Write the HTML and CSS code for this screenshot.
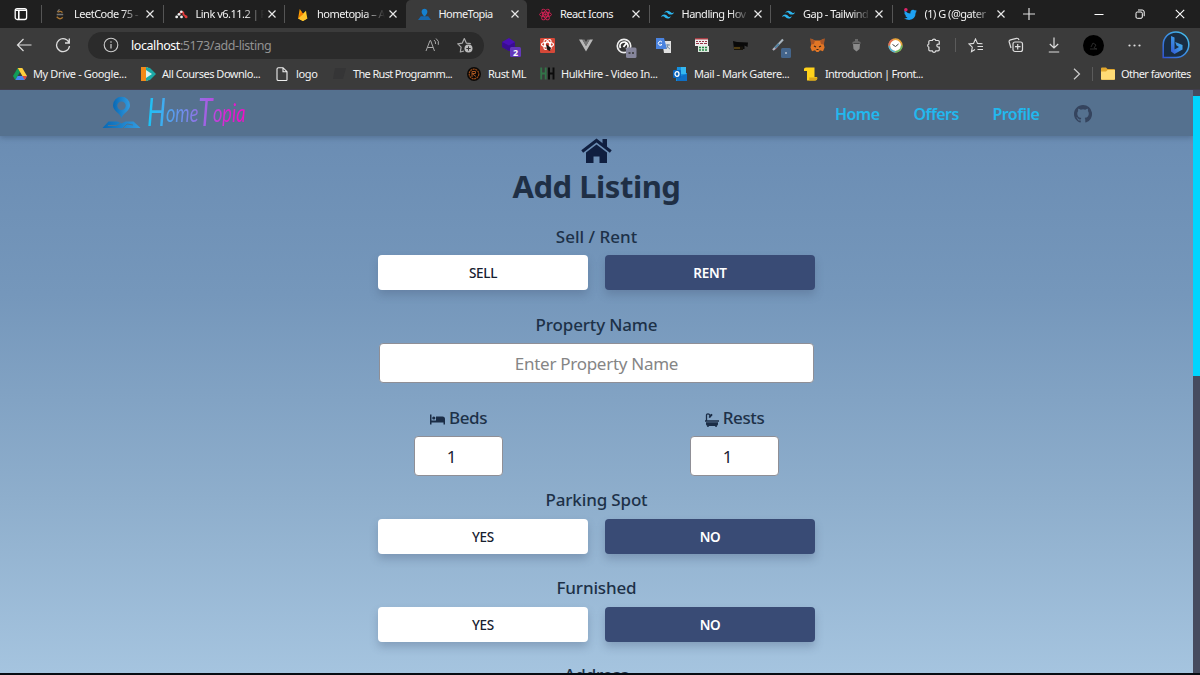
FILE: index.html
```html
<!DOCTYPE html>
<html lang="en">
<head>
<meta charset="utf-8">
<title>HomeTopia</title>
<link rel="stylesheet" href="styles.css">
</head>
<body>
<svg class="defs" width="0" height="0">
  <defs>
    <symbol id="close" viewBox="0 0 10 10"><path d="M1.5 1.5l7 7M8.5 1.5l-7 7" stroke="#e8e8e8" stroke-width="1.2" fill="none"/></symbol>
    <symbol id="tailwind" viewBox="0 0 24 24"><path fill="#2cb5ee" d="M12 5c-3.200 0-5.200 1.600-6 4.800 1.200-1.600 2.600-2.200 4.200-1.800.9.230 1.560.890 2.280 1.630C13.660 10.810 15.020 12.200 18 12.200c3.200 0 5.200-1.600 6-4.800-1.200 1.600-2.600 2.200-4.200 1.800-.910-.230-1.570-.890-2.290-1.630C16.340 6.390 14.980 5 12 5zM6 12.200c-3.200 0-5.200 1.600-6 4.800 1.200-1.600 2.600-2.200 4.200-1.800.910.230 1.570.890 2.290 1.630C7.660 18.010 9.020 19.400 12 19.400c3.200 0 5.200-1.600 6-4.800-1.200 1.600-2.600 2.200-4.200 1.800-.910-.230-1.570-.890-2.290-1.630C10.340 13.590 8.980 12.200 6 12.200z"/></symbol>
    <symbol id="atom" viewBox="0 0 24 24"><g fill="none" stroke="currentColor" stroke-width="1.700"><ellipse cx="12" cy="12" rx="11" ry="4.300"/><ellipse cx="12" cy="12" rx="11" ry="4.300" transform="rotate(60 12 12)"/><ellipse cx="12" cy="12" rx="11" ry="4.300" transform="rotate(120 12 12)"/></g><circle cx="12" cy="12" r="2.200" fill="currentColor"/></symbol>
  </defs>
</svg>

<div class="browser">
  <div class="tabs">
    <div class="tab-menu"><svg width="14" height="14" viewBox="0 0 14 14"><rect x="1.200" y="1.700" width="11.400" height="10.800" rx="2" fill="none" stroke="#fff" stroke-width="1.300"/><path d="M1.500 3.200h11M4.800 4v8" fill="none" stroke="#fff" stroke-width="1.600"/></svg></div>
    <div class="tab"><svg class="fav" viewBox="0 0 14 14"><path d="M7 1.500L4.500 4.200M4 7h7" stroke="#777" stroke-width="1.400"/><path d="M5 4.500q4-2 5 .5M4 9.500q3.500 4 6.500.5" stroke="#a87430" stroke-width="1.500" fill="none"/></svg><span class="tab-text">LeetCode 75 -</span><svg class="x"><use href="#close"/></svg></div>
    <div class="tab"><svg class="fav" viewBox="0 0 14 14"><path d="M5 5.500q5-3 4 1.500l3 2.500" stroke="#e33b3b" stroke-width="2" fill="none"/><g fill="#eee"><circle cx="6.800" cy="4" r="1.400"/><circle cx="4.300" cy="6.800" r="1.500"/><circle cx="1.800" cy="9.600" r="1.500"/><circle cx="7" cy="9.600" r="1.500"/></g><circle cx="12" cy="9.600" r="1.500" fill="#e33b3b"/></svg><span class="tab-text">Link v6.11.2 | F</span><svg class="x"><use href="#close"/></svg></div>
    <div class="tab"><svg class="fav" viewBox="0 0 14 14"><path d="M2.300 11.200L4 1l2.500 3.500z" fill="#ffa000"/><path d="M2.300 11.200L10.700 3l1.500 8.200L7.500 14z" fill="#ffca28"/><path d="M2.300 11.200L5.500 3.800l3 3z" fill="#f57c00"/><path d="M2.300 11.200l6-5L12.200 11.200 7.500 14z" fill="#ffc22a"/></svg><span class="tab-text">hometopia – A</span><svg class="x"><use href="#close"/></svg></div>
    <div class="tab active"><svg class="fav" viewBox="0 0 14 14"><path d="M7 9.500Q3.200 5.800 4 3a3.100 3.100 0 0 1 6 0q.8 2.800-3 6.500z" fill="#1581d0"/><path d="M3 9h8l3 4H0z" fill="#1767ac"/></svg><span class="tab-text full">HomeTopia</span><svg class="x"><use href="#close"/></svg></div>
    <div class="tab"><svg class="fav rose" viewBox="0 0 14 14"><use href="#atom"/></svg><span class="tab-text full">React Icons</span><svg class="x"><use href="#close"/></svg></div>
    <div class="tab"><svg class="fav" viewBox="0 0 14 14"><use href="#tailwind"/></svg><span class="tab-text">Handling Hov</span><svg class="x"><use href="#close"/></svg></div>
    <div class="tab"><svg class="fav" viewBox="0 0 14 14"><use href="#tailwind"/></svg><span class="tab-text">Gap - Tailwind</span><svg class="x"><use href="#close"/></svg></div>
    <div class="tab"><svg class="fav" viewBox="0 0 14 14"><path d="M.800 2.800q2.500 3 6 3 0-3.800 3-3.800 1.200 0 2 .8l1.800-.6-1 1.700 1.200-.200-1.300 1.500q0 7-7 7.600Q2.800 12.800 0 11.300q2.500 0 3.800-1.200-2-.3-2.500-2l1-.100Q.3 7.200.300 5.200l1 .300Q-.200 4.500.800 2.800z" fill="#1da1f2"/><circle cx="2" cy="2" r="1.900" fill="#e0246a"/></svg><span class="tab-text">(1) G (@gater</span><svg class="x"><use href="#close"/></svg></div>
    <svg class="plus" width="14" height="14" viewBox="0 0 14 14"><path d="M7 1v12M1 7h12" stroke="#ddd" stroke-width="1.200"/></svg>
    <div class="window-buttons">
      <svg viewBox="0 0 10 10"><path d="M.5 5.500h9" stroke="#fff"/></svg>
      <svg viewBox="0 0 10 10"><rect x="1" y="3" width="6.300" height="6.300" rx="1.300" fill="none" stroke="#fff"/><path d="M3 1h4.200Q9.200 1 9.200 3v4.200" fill="none" stroke="#fff"/></svg>
      <svg viewBox="0 0 10 10"><path d="M.8.8l8.400 8.400M9.200.8L.8 9.200" stroke="#fff" stroke-width="1.100"/></svg>
    </div>
  </div>

  <div class="toolbar">
    <svg class="back" width="16" height="14" viewBox="0 0 16 14"><path d="M15.500 7H1.500M7.500 1L1.500 7l6 6" stroke="#ddd" stroke-width="1.200" fill="none"/></svg>
    <svg class="reload" width="16" height="16" viewBox="0 0 16 16"><path d="M14.200 6A6.500 6.500 0 1 0 14.500 9M14.300 1.500V6H10" stroke="#ddd" stroke-width="1.300" fill="none"/></svg>
    <div class="address">
      <svg width="16" height="16" viewBox="0 0 16 16"><circle cx="8" cy="8" r="6.800" fill="none" stroke="#ccc" stroke-width="1.100"/><path d="M8 7v4.500M8 4.300v1.400" stroke="#ccc" stroke-width="1.200"/></svg>
      <span class="url"><b>localhost</b>:5173/add-listing</span>
      <svg class="read" width="15" height="14" viewBox="0 0 15 14"><path d="M1 13L5 2.500h.6L9.500 13M2.500 9.500H8M9 2q2 1.500 1.500 4M11 .5Q14.500 3 13.300 6.800" stroke="#aaa" fill="none"/></svg>
      <svg width="16" height="16" viewBox="0 0 16 16"><path d="M7 14l-3.700 1 .8-4.800L.8 6.800l4.500-.7L7.300 1.500l2 4.600 4.500.6" stroke="#aaa" stroke-width="1.200" fill="none" stroke-linejoin="round"/><circle cx="11.500" cy="11.500" r="4" fill="#bbb"/><path d="M11.500 9.300v4.400M9.300 11.500h4.400" stroke="#333"/></svg>
    </div>
    <div class="extensions">
      <div><svg class="cube" width="20" height="19" viewBox="0 0 20 19"><path d="M1 4l7-4 6 4v6l-6 3-7-4z" fill="#4a10b5"/><path d="M1 4l7 3.500L14 4v6l-6 3-7-4z" fill="#390d91"/><rect x="9" y="9" width="11" height="10" rx="1.500" fill="#6439bb"/><text x="12" y="17.500" class="badge-text">2</text></svg></div>
      <div><svg width="15" height="15" viewBox="0 0 15 15"><rect width="15" height="15" rx="1" fill="#d54838"/><g fill="none" stroke="#fff" stroke-width="1.100"><ellipse cx="7.500" cy="6.500" rx="6" ry="2.300"/><ellipse cx="7.500" cy="6.500" rx="5.500" ry="2.300" transform="rotate(60 7.500 6.500)"/><ellipse cx="7.500" cy="6.500" rx="5.500" ry="2.300" transform="rotate(120 7.500 6.500)"/></g><path d="M6.500 6l4.500 4-1 3-2.500-1-1-2z" fill="#151515"/></svg></div>
      <div><svg width="14" height="13" viewBox="0 0 14 13"><path d="M0 .5h3.300L7 7 10.700.5H14L7 12.500z" fill="#b8b8b8"/><path d="M3.300.500h2.200L7 3 8.500.500h2.200L7 7z" fill="#777"/></svg></div>
      <div><svg class="low" width="21" height="20" viewBox="0 0 21 20"><circle cx="8" cy="8" r="6.700" fill="#333" stroke="#eee" stroke-width="1.700"/><path d="M4.500 10A4 4 0 1 1 10 11.500M7.500 9L11 4.500" fill="none" stroke="#fff" stroke-width="1.800"/><rect x="10" y="9.500" width="10.500" height="10.500" rx="1.500" fill="#85859b"/><path d="M12.500 15h2M16 15h2" stroke="#333" stroke-width="1.500"/></svg></div>
      <div><svg width="15" height="15" viewBox="0 0 15 15"><path d="M6 3h9v12H8z" fill="#e0e0e0"/><path d="M0 0h8l3 11H0z" fill="#4a83df"/><path d="M6 4.200A2 2 0 1 0 6 6.500H4.500" stroke="#fff" fill="none"/><path d="M10 7h4M12 6q0 3-2 5M11 8q1 2 3 3" stroke="#708ba8" fill="none"/></svg></div>
      <div><svg width="14" height="14" viewBox="0 0 14 14"><path d="M0 0h13v8H0z" fill="#eee"/><path d="M0 0h13v1.500H0z" fill="#a53c43"/><path d="M1 3.500h11" stroke="#963447" stroke-dasharray="2 1"/><path d="M1 5.500h11" stroke="#963447" stroke-dasharray="3 1"/><path d="M3 8h11v6H3z" fill="#dde8de"/><path d="M4 9.500h9M4 12h9" stroke="#248544" stroke-width="1.600" stroke-dasharray="2 1"/></svg></div>
      <div><svg width="15" height="10" viewBox="0 0 15 10"><path d="M0 1l4 1 11 .500-.5 4.500-3-1.500V9H1z" fill="#090909"/><path d="M1 6.500h9V10H1z" fill="#17130b"/><path d="M1 8h6" stroke="#8a681b"/></svg></div>
      <div><svg class="low" width="20" height="20" viewBox="0 0 20 20"><path d="M1 12l3-3 3 0-3 3z" fill="#a43d50"/><path d="M2 12L12 1.500" stroke="#a9b6c0" stroke-width="2"/><path d="M4 10l4-4" stroke="#5382a0" stroke-width="2" fill="none"/><rect x="10" y="10" width="10" height="10" rx="1.500" fill="#44658b"/><path d="M14 15h2" stroke="#eee"/></svg></div>
      <div><svg width="15" height="14" viewBox="0 0 15 14"><path d="M.500.500l4.500 2h5l4.500-2-.7 6 .8 3-1.600 3.700-3-1L8.500 14h-2L5 12.200l-3 1L.4 9.500l.8-3z" fill="#e27625"/><path d="M.5.500l4.500 2-1 3.500-3 .5zM14.500.5l-4.500 2 1 3.500 3 .5z" fill="#aa5526"/><path d="M4 8l2 1M11 8l-2 1M6.500 11.500h2" stroke="#33251d" stroke-width="1.200"/></svg></div>
      <div><svg width="9" height="13" viewBox="0 0 9 13"><path d="M3 0h3v2l2.500 1v2h-8V3L3 2z" fill="#686868"/><path d="M1 5h7l-.5 5-3 2.500-3-2.500z" fill="#8a8a8a"/><path d="M1.500 4.500h6" stroke="#444"/></svg></div>
      <div><svg width="15" height="15" viewBox="0 0 15 15"><circle cx="7.500" cy="7.500" r="6.300" fill="#fff" stroke="#e9a63b" stroke-width="1.700"/><path d="M1.200 7.500A6.300 6.300 0 0 0 7.500 13.800" stroke="#56b6dc" stroke-width="1.700" fill="none"/><path d="M7.500 13.800a6.300 6.300 0 0 0 6.300-6.300" stroke="#66bb6a" stroke-width="1.700" fill="none"/><path d="M1.200 7.500A6.300 6.300 0 0 1 5 1.700" stroke="#e46d5b" stroke-width="1.700" fill="none"/><path d="M4.500 6.500l3 2L10.500 6" stroke="#444" fill="none"/></svg></div>
      <div><svg width="14" height="15" viewBox="0 0 14 15"><path d="M3 2.500h2.300a1.800 1.800 0 0 1 3.500 0H11q1.300 0 1.300 1.300v2.300h-1a1.500 1.500 0 0 0 0 3h1v2.500q0 1.300-1.300 1.300H8.800a1.800 1.800 0 0 1-3.500 0H3q-1.200 0-1.200-1.300V9.200a1.700 1.700 0 0 1 0-3.200V3.800Q1.800 2.500 3 2.500z" stroke="#ddd" stroke-width="1.200" fill="none"/></svg></div>
    </div>
    <div class="tool-actions">
      <div><svg width="16" height="15" viewBox="0 0 16 15"><path d="M7 11.500L3.500 13.700l.8-4.500L1 6l4.500-.6L7.500 1l2 4.400 5 .4M9.500 8.500H15M9.500 11.500H15" stroke="#ddd" stroke-width="1.100" fill="none"/></svg></div>
      <div><svg width="16" height="16" viewBox="0 0 16 16"><rect x="5" y="5" width="9.500" height="9.500" rx="2" fill="none" stroke="#ddd" stroke-width="1.200"/><path d="M9.700 7v5.500M7 9.700h5.500M3 11L1.200 5Q.800 3.300 2.500 2.800L8.500 1.300Q10.500 1 11 3" stroke="#ddd" stroke-width="1.200" fill="none"/></svg></div>
      <div><svg width="12" height="16" viewBox="0 0 12 16"><path d="M6 .5V11M1.800 7L6 11l4.200-4M.8 15h10.400" stroke="#ddd" stroke-width="1.200" fill="none"/></svg></div>
      <div><svg width="21" height="21" viewBox="0 0 21 21"><circle cx="10.500" cy="10.500" r="10.500" fill="#000"/><path d="M8 12l2-4 3 2-2 3 3 1M7 14h7" stroke="#2a2a2a" fill="none"/></svg></div>
      <div><svg width="13" height="3" viewBox="0 0 13 3"><circle cx="1.500" cy="1.500" r="1.100" fill="#ddd"/><circle cx="6.500" cy="1.500" r="1.100" fill="#ddd"/><circle cx="11.500" cy="1.500" r="1.100" fill="#ddd"/></svg></div>
      <div><svg width="28" height="28" viewBox="0 0 28 28"><defs><linearGradient id="bing" x1="0" x2="1" y1="1" y2="0"><stop stop-color="#3155d6"/><stop offset="1" stop-color="#47c8ef"/></linearGradient></defs><path d="M1.200 26.500V14A12.800 12.800 0 1 1 14 26.500z" fill="#192d42" stroke="url(#bing)" stroke-width="1.500"/><path d="M9 5l3.500 1.500v12L17 16l-2.500-1.500L13.200 11l7.300 3v4.500L12.500 23 9 20.500z" fill="url(#bing)"/></svg></div>
    </div>
  </div>

  <div class="bookmarks">
    <div class="bm b1"><svg width="14" height="12" viewBox="0 0 14 12"><path d="M4.700 0L0 8l2.300 4L7 4z" fill="#109d58"/><path d="M4.700 0h4.600L14 8H9.400z" fill="#ffcf3d"/><path d="M4.600 8H14l-2.300 4H2.300z" fill="#4688f4"/><path d="M11.700 12L14 8H9.400z" fill="#e24a3b"/></svg><span>My Drive - Google...</span></div>
    <div class="bm b2"><svg width="15" height="14" viewBox="0 0 15 14"><path d="M0 0h7v14H0z" fill="#f28a19"/><path d="M5 0l4 1 6 6-6 6-4 1z" fill="#1ca9a7"/><path d="M5 3l6 4-6 4z" fill="#d5f2ef"/></svg><span>All Courses Downlo...</span></div>
    <div class="bm b3"><svg width="12" height="14" viewBox="0 0 12 14"><path d="M2.500.7H7L11 4.700v8q0 .8-.8.8H2.500q-1.500 0-1.500-1.300V2Q1 .7 2.500.7zM7 .7v4h4" fill="none" stroke="#eee" stroke-width="1.100"/></svg><span>logo</span></div>
    <div class="bm b4"><svg width="13" height="13" viewBox="0 0 13 13"><path d="M2 1h11l-3 11H0z" fill="#353536"/></svg><span>The Rust Programm...</span></div>
    <div class="bm b5"><svg width="14" height="14" viewBox="0 0 14 14"><circle cx="7" cy="7" r="7" fill="#0c0907"/><circle cx="7" cy="7" r="4.800" fill="none" stroke="#994b18" stroke-width="1.200" stroke-dasharray="2 .6"/><path d="M5 10V4.500h3.500v2H5l4 3" fill="none" stroke="#a55420"/></svg><span>Rust ML</span></div>
    <div class="bm b6"><svg width="15" height="13" viewBox="0 0 15 13"><path d="M1.200.500v12M5.700.500v12M1 6.500h5" stroke="#327448" stroke-width="1.900"/><path d="M9 .500v12M13.500.500v12M9 6.500h5" stroke="#0b0b0b" stroke-width="1.900"/></svg><span>HulkHire - Video In...</span></div>
    <div class="bm b7"><svg width="14" height="14" viewBox="0 0 14 14"><path d="M4 0h9v6h1v8H3z" fill="#1490df"/><path d="M8 0h5v7H8z" fill="#35b8f1"/><path d="M4 10l10-3v7H4z" fill="#0f6fc5"/><rect y="3" width="8" height="8" rx="1" fill="#0b64bb"/><ellipse cx="4" cy="7" rx="2" ry="2.300" fill="none" stroke="#fff" stroke-width="1.300"/></svg><span>Mail - Mark Gatere...</span></div>
    <div class="bm b8"><svg width="14" height="14" viewBox="0 0 14 14"><path d="M0 2Q0 .5 2 .5h8.500V10H13q.5 3.500-2 3.500H3V4H0z" fill="#ffd21b"/><path d="M5 10.500h8.500q0 3-2.500 3H4Q6 13 5 10.500z" fill="#dba51a"/></svg><span>Introduction | Front...</span></div>
    <svg class="chevron" width="8" height="12" viewBox="0 0 8 12"><path d="M1 .8L6.500 6 1 11.200" fill="none" stroke="#ccc" stroke-width="1.200"/></svg>
    <div class="bm b9"><svg width="14" height="13" viewBox="0 0 14 13"><path d="M0 1.500Q0 .5 1 .5h4l1.500 1.500H13q1 0 1 1V12q0 .7-1 .7H1Q0 12.700 0 12z" fill="#e1a72e"/><path d="M0 4.500h5L6.500 3H14v9q0 .7-1 .7H1Q0 12.700 0 12z" fill="#ffdb75"/></svg><span>Other favorites</span></div>
  </div>
</div>

<div class="viewport">
  <div class="page">
    <header class="header">
      <div class="logo">
        <svg width="39" height="34" viewBox="0 0 39 34"><defs><linearGradient id="pin" x2="1"><stop stop-color="#0868b4"/><stop offset="1" stop-color="#329be0"/></linearGradient></defs><path fill="url(#pin)" fill-rule="evenodd" d="M19.500 22C18 17 11 15 11 9.200a8.500 8.500 0 0 1 17 0C28 15 21 17 19.500 22zM19.500 5.500a4.200 4.200 0 1 0 0 8.400 4.200 4.200 0 0 0 0-8.400z"/><path d="M6.500 25.500h9l4 2 4-2h8l7 6.500H.5z" fill="url(#pin)"/><path d="M6 29.500h8l4-2M21 32l4-4 6 1" stroke="#52728f" fill="none"/></svg>
        <span class="wordmark"><i>H</i>ome<i>T</i>opia</span>
      </div>
      <nav class="nav">
        <a class="n1">Home</a><a class="n2">Offers</a><a class="n3">Profile</a>
        <svg width="18" height="18" viewBox="0 0 16 16"><path fill="#35445e" d="M8 0C3.580 0 0 3.580 0 8c0 3.540 2.290 6.530 5.470 7.590.4.070.55-.170.55-.380v-1.490c-2.010.370-2.530-.490-2.690-.940-.090-.230-.480-.940-.820-1.130-.280-.150-.680-.520-.010-.530.630-.010 1.080.580 1.230.820.720 1.210 1.870.870 2.330.660.070-.520.280-.870.510-1.070-1.780-.200-3.640-.890-3.640-3.950 0-.870.310-1.590.820-2.150-.080-.200-.360-1.020.080-2.120 0 0 .670-.210 2.200.820a7.600 7.600 0 0 1 4 0c1.530-1.040 2.200-.820 2.200-.820.440 1.100.160 1.920.080 2.120.510.560.820 1.270.820 2.150 0 3.070-1.870 3.750-3.650 3.950.290.250.540.730.540 1.480v2.200c0 .210.150.460.550.380A8 8 0 0 0 8 0z"/></svg>
      </nav>
    </header>
    <main class="content">
      <svg class="house" width="31" height="26" viewBox="0 0 31 26"><path d="M1.200 13.500L15.500 2.500 29.800 13.500" fill="none" stroke="#101f40" stroke-width="3"/><path d="M21.500 1H26v9l-4.500-3.500z" fill="#101f40"/><path d="M5 14.500L15.500 6.500 26 14.500V25h-7.500v-6.500h-6V25H5z" fill="#101f40"/></svg>
      <h1>Add Listing</h1>
      <label class="l1">Sell / Rent</label>
      <div class="choices"><button>SELL</button><button class="on">RENT</button></div>
      <label class="l2">Property Name</label>
      <input class="name" type="text" placeholder="Enter Property Name">
      <div class="counts">
        <div class="count">
          <label><svg width="15" height="11" viewBox="0 0 15 11"><path d="M0 .5h1.500v6H6V2.500h6.500Q15 2.500 15 5v5.500h-1.500v-2h-12v2H0z" fill="#1b2d46"/><circle cx="3.800" cy="4" r="1.600" fill="#1b2d46"/></svg><span>Beds</span></label>
          <div class="number">1</div>
        </div>
        <div class="count">
          <label><svg width="14" height="14" viewBox="0 0 14 14"><path d="M1.500 8V2.300Q1.500.8 3 .8t1.500 1.500M4 4.500L7 1.500" fill="none" stroke="#1b2d46" stroke-width="1.300"/><path d="M4 2.500L6.500.800 7.500 2 5 5zM0 7.200h14v1.500H0zM1 9.300h12v2q0 1.200-1.200 1.500V14h-1.500v-1H3.700v1H2.200v-1.200Q1 12.500 1 11.300z" fill="#1b2d46"/></svg><span>Rests</span></label>
          <div class="number">1</div>
        </div>
      </div>
      <label class="l5">Parking Spot</label>
      <div class="choices"><button>YES</button><button class="on">NO</button></div>
      <label class="l6">Furnished</label>
      <div class="choices"><button>YES</button><button class="on">NO</button></div>
      <label class="l7">Address</label>
    </main>
  </div>
  <div class="scrollbar"><div class="thumb"></div></div>
</div>
</body>
</html>
```

FILE: styles.css
```css
* { box-sizing: border-box; }
body {
  margin: 0;
  width: 1200px;
  height: 675px;
  overflow: hidden;
  background: #080b12;
  font-family: "Noto Sans", "Open Sans", sans-serif;
}
svg { display: block; flex: none; }
.defs { position: absolute; }

.browser { height: 90px; background: #3b3b3b; color: #f2f2f2; border-bottom: 1px solid #403d4b; }
.tabs { display: flex; height: 28px; background: #1f1f1f; align-items: center; }
.tab-menu { width: 41px; padding-left: 14px; }
.tab {
  display: flex;
  align-items: center;
  width: 121.5px;
  height: 28px;
  padding-left: 12px;
  background: linear-gradient(#555, #555) left center / 1px 18px no-repeat;
}
.tab.active { background: #3b3b3b; border-radius: 5px 5px 0 0; }
.tab.active + .tab { background: none; }
.fav { width: 13px; height: 13px; margin-right: 8px; }
.rose { color: #d42155; }
.tab-text {
  width: 68px;
  font-size: 11px;
  line-height: 16px;
  white-space: nowrap;
  letter-spacing: -.5px;
  -webkit-mask-image: linear-gradient(90deg, #000 48px, transparent 68px);
  mask-image: linear-gradient(90deg, #000 48px, transparent 68px);
}
.tab-text.full { -webkit-mask-image: none; mask-image: none; letter-spacing: -.55px; }
.x { width: 10px; height: 10px; margin-left: 3px; }
.plus { margin-left: 9px; }
.window-buttons { display: flex; gap: 30.5px; margin-left: 58px; }
.window-buttons svg { width: 10px; height: 10px; }

.toolbar { display: flex; align-items: center; height: 34px; padding-left: 16px; }
.reload { margin-left: 23px; }
.address {
  display: flex;
  align-items: center;
  width: 396px;
  height: 27px;
  margin-left: 17px;
  padding: 0 11px 0 15px;
  border-radius: 14px;
  background: #2b2b2b;
}
.url { margin-left: 12px; flex: 1; font-size: 12.5px; color: #929292; letter-spacing: -.43px; }
.url b { font-weight: 400; color: #fff; }
.read { margin-right: 17px; }
.extensions { display: flex; margin-left: 5.5px; }
.extensions div { display: flex; align-items: center; justify-content: center; width: 38.65px; height: 28px; }
.extensions .cube { margin: 5px -4px 0 0; }
.extensions .low { margin: 5px -4px 0 0; }
.badge-text { font-size: 9px; font-weight: 700; fill: #fff; }
.tool-actions {
  display: flex;
  margin-left: 2px;
  background: linear-gradient(#5b5b5b, #5b5b5b) left center / 1px 14px no-repeat;
}
.tool-actions div { display: flex; align-items: center; justify-content: center; width: 38px; height: 28px; }
.tool-actions div:first-child { width: 42px; }
.tool-actions div:nth-child(4) { width: 41px; }
.tool-actions div:nth-child(5) { width: 41px; }
.tool-actions div:nth-child(6) { width: 41px; }

.bookmarks { display: flex; align-items: center; height: 23px; padding-left: 13px; font-size: 11px; letter-spacing: -.37px; }
.bm { display: flex; align-items: center; gap: 6px; white-space: nowrap; }
.b1 { width: 128px; }
.b2 { width: 135px; letter-spacing: -.48px; }
.b3 { width: 57px; gap: 8px; }
.b4 { width: 134px; gap: 7px; letter-spacing: -.65px; }
.b5 { width: 73px; gap: 7px; letter-spacing: -.5px; }
.b6 { width: 133px; letter-spacing: -.42px; }
.b7 { width: 131px; gap: 7px; letter-spacing: -.43px; }
.b8 { width: 269px; gap: 7px; letter-spacing: -.65px; }
.b9 { margin-left: 11px; padding-left: 9px; letter-spacing: -.55px; background: linear-gradient(#5b5b5b, #5b5b5b) left center / 1px 14px no-repeat; }

.viewport { display: flex; height: 583px; }
.page {
  width: 1193px;
  height: 583px;
  overflow: hidden;
  background: linear-gradient(#688ab1, #7597bb 35%, #8eaecc 70%, #a5c4df);
}
.header {
  display: flex;
  align-items: center;
  justify-content: space-between;
  height: 46px;
  padding: 0 101px 0 102px;
  background: #55718f;
  box-shadow: 0 2px 5px rgba(60, 85, 115, .45);
}
.logo { display: flex; align-items: center; gap: 6px; }
.wordmark {
  width: 146px;
  height: 46px;
  font: italic 26px/44px Lato, sans-serif;
  white-space: nowrap;
  transform: scaleX(.7);
  transform-origin: left;
  color: transparent;
  background: linear-gradient(90deg, #19c5f5, #7b86ea 40%, #a95be2 60%, #e31bcf 80%, #f00fc5);
  -webkit-background-clip: text;
  background-clip: text;
}
.wordmark i { font-size: 38px; vertical-align: -4px; line-height: 36px; }
.nav { display: flex; align-items: center; padding-top: 1px; font-size: 16px; font-weight: 600; color: #22b8ee; }
.n1 { width: 78.500px; }
.n2 { width: 79px; }
.n3 { width: 81.500px; }
.nav a { letter-spacing: -.55px; padding-top: 1px; }

.content { display: flex; flex-direction: column; align-items: center; color: #1d3148; }
.house { margin-top: 2px; }
h1 { margin: 0; height: 46px; font-size: 31px; line-height: 44px; font-weight: 700; color: #1f2f45; letter-spacing: -.5px; }
label { height: 26px; font-size: 17px; line-height: 26px; font-weight: 500; letter-spacing: -.15px; }
.l1 { margin-top: 14px; letter-spacing: 0; }
.choices { display: flex; gap: 17px; width: 437px; margin-top: 5px; }
.choices button {
  flex: 1;
  height: 35px;
  padding: 0;
  border: 0;
  border-radius: 4px;
  background: #fff;
  color: #17202f;
  font: 500 13.5px/36px "Noto Sans", sans-serif;
  letter-spacing: -.3px;
  box-shadow: 0 5px 8px rgba(70, 90, 120, .32);
}
.choices .on { background: #394b75; color: #fff; font-weight: 600; }
.l2 { margin-top: 22px; }
.name {
  width: 435px;
  height: 40px;
  margin-top: 5px;
  padding: 1px 0 0;
  border: 1px solid #8f8f96;
  border-radius: 4px;
  background: #fff;
  text-align: center;
  font: 17px "Noto Sans", sans-serif;
  letter-spacing: -.28px;
}
.name::placeholder { color: #858585; }
.counts { display: flex; justify-content: space-between; width: 365px; margin-top: 22px; }
.count { display: flex; flex-direction: column; align-items: center; width: 89px; }
.count label { display: flex; align-items: center; gap: 4px; letter-spacing: -.4px; }
.count label svg { margin-top: 3px; }
.number {
  width: 89px;
  height: 40px;
  margin-top: 5px;
  padding-right: 14px;
  border: 1px solid #8f8f96;
  border-radius: 4px;
  background: #fff;
  color: #1b2333;
  text-align: center;
  font-size: 17px;
  line-height: 40px;
}
.l5 { margin-top: 11px; }
.l5 + .choices, .l6 + .choices { margin-top: 5.500px; }
.l6 { margin-top: 21.500px; }
.l7 { margin-top: 20.500px; }

.scrollbar { width: 7px; padding-top: 6px; background: #464b5f; }
.thumb { height: 280px; background: #00d5ff; }
```
